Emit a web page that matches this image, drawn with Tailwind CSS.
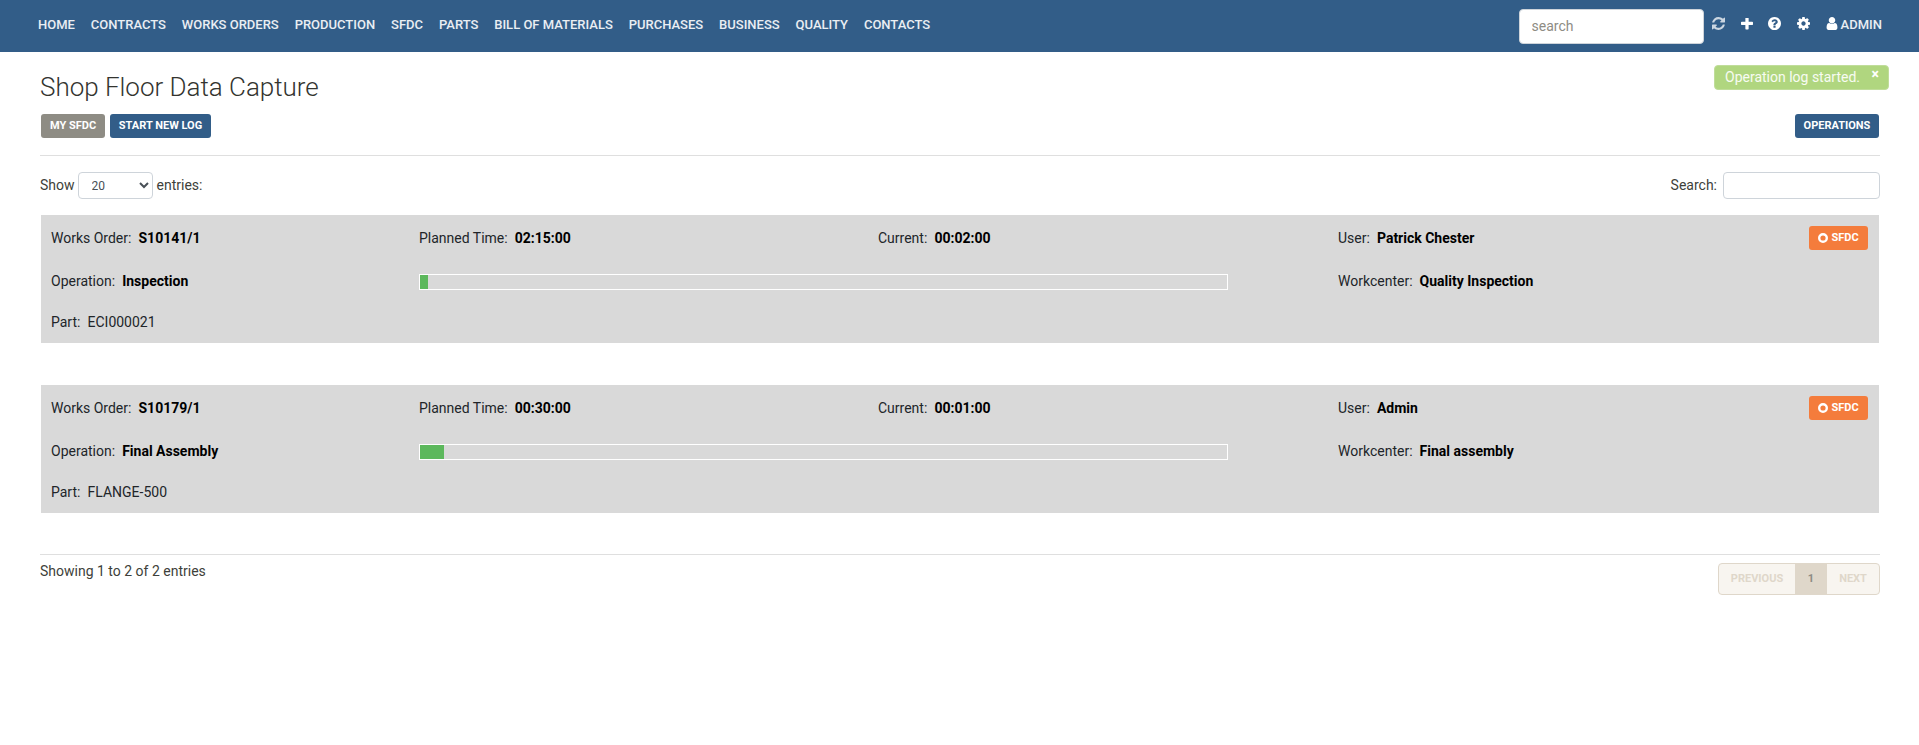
<!DOCTYPE html>
<html lang="en">
<head>
    <meta charset="UTF-8">
    <title>Shop Floor Data Capture</title>
    <script src="https://cdn.jsdelivr.net/npm/@tailwindcss/browser@4"></script>
</head>
<body class="bg-white font-['Roboto',sans-serif] text-[14px] text-[#3e3f3a]">
    <!-- Navbar -->
    <nav class="h-[52px] bg-[#325d88] flex items-center pl-[38px] pr-[37px]">
        <div class="flex gap-[15.9px] text-[13px] font-medium uppercase text-white/90 -mt-[2px]">
            <a>Home</a><a>Contracts</a><a>Works Orders</a><a>Production</a><a>SFDC</a><a>Parts</a><a>Bill of Materials</a><a>Purchases</a><a>Business</a><a>Quality</a><a>Contacts</a>
        </div>
        <div class="ml-auto flex items-center">
            <input class="w-[185px] h-[35px] bg-white rounded-[4px] border border-[#ced4da] px-[12px] text-[14px] placeholder:text-[#8e8c84] mr-[8px]" placeholder="search">
            <svg class="w-[13px] h-[13px] -mt-[5px] fill-white/75 mr-[16px]" viewBox="128 128 1536 1536"><path d="M1639 1056q0 5-1 7-64 268-268 434.5t-478 166.5q-146 0-282.5-55t-243.5-157l-129 129q-19 19-45 19t-45-19-19-45v-448q0-26 19-45t45-19h448q26 0 45 19t19 45-19 45l-137 137q71 66 161 102t187 36q134 0 250-65t186-179q11-17 53-117 8-23 30-23h192q13 0 22.5 9.5t9.5 22.5zm25-800v448q0 26-19 45t-45 19h-448q-26 0-45-19t-19-45 19-45l138-138q-148-137-349-137-134 0-250 65t-186 179q-11 17-53 117-8 23-30 23h-199q-13 0-22.5-9.5t-9.5-22.5v-7q65-268 270-434.5t480-166.5q146 0 284 55.5t245 156.5l130-129q19-19 45-19t45 19 19 45z"/></svg>
            <svg class="w-[12px] h-[12px] -mt-[5px] fill-white mr-[15px]" viewBox="192 192 1408 1408"><path d="M1600 736v192q0 40-28 68t-68 28h-416v416q0 40-28 68t-68 28h-192q-40 0-68-28t-28-68v-416h-416q-40 0-68-28t-28-68v-192q0-40 28-68t68-28h416v-416q0-40 28-68t68-28h192q40 0 68 28t28 68v416h416q40 0 68 28t28 68z"/></svg>
            <svg class="w-[13px] h-[13px] -mt-[5px] fill-white mr-[16px]" viewBox="128 128 1536 1536"><path d="M1024 1376v-192q0-14-9-23t-23-9h-192q-14 0-23 9t-9 23v192q0 14 9 23t23 9h192q14 0 23-9t9-23zm256-672q0-88-55.5-163t-138.5-116-170-41q-243 0-371 213-15 24 8 42l132 100q7 6 19 6 16 0 25-12 53-68 86-92 34-24 86-24 48 0 85.5 26t37.5 59q0 38-20 61t-68 45q-63 28-115.5 86.5t-52.5 125.5v36q0 14 9 23t23 9h192q14 0 23-9t9-23q0-19 21.5-49.5t54.5-49.5q32-18 49-28.5t46-35 44.5-48 28-60.5 12.5-81zm384 192q0 209-103 385.5t-279.5 279.5-385.5 103-385.5-103-279.5-279.5-103-385.5 103-385.5 279.5-279.5 385.5-103 385.5 103 279.5 279.5 103 385.5z"/></svg>
            <svg class="w-[13px] h-[13px] -mt-[5px] fill-white mr-[16px]" viewBox="128 128 1536 1536"><path d="M1152 896q0-106-75-181t-181-75-181 75-75 181 75 181 181 75 181-75 75-181zm512-109v222q0 12-8 23t-20 13l-185 28q-19 54-39 91 35 50 107 138 10 12 10 25t-9 23q-27 37-99 108t-94 71q-12 0-26-9l-138-108q-44 23-91 38-16 136-29 186-7 28-36 28h-222q-14 0-24.5-8.5t-11.5-21.5l-28-184q-49-16-90-37l-141 107q-10 9-25 9-14 0-25-11-126-114-165-168-7-10-7-23 0-12 8-23 15-21 51-66.5t54-70.5q-27-50-41-99l-183-27q-13-2-21-12.5t-8-23.5v-222q0-12 8-23t19-13l186-28q14-46 39-92-40-57-107-138-10-12-10-24 0-10 9-23 26-36 98.5-107.5t94.5-71.5q13 0 26 10l138 107q44-23 91-38 16-136 29-186 7-28 36-28h222q14 0 24.5 8.5t11.5 21.5l28 184q49 16 90 37l142-107q9-9 24-9 13 0 25 10 129 119 165 170 7 8 7 22 0 12-8 23-15 21-51 66.5t-54 70.5q26 50 41 98l183 28q13 2 21 12.5t8 23.5z"/></svg>
            <svg class="w-[12px] h-[13px] -mt-[5px] fill-white mr-[3px]" viewBox="256 128 1280 1536"><path d="M1536 1399q0 109-62.5 187t-150.5 78h-854q-88 0-150.5-78t-62.5-187q0-85 8.5-160.5t31.5-152 58.5-131 94-89 134.5-34.5q131 128 313 128t313-128q76 0 134.5 34.5t94 89 58.5 131 31.5 152 8.5 160.5zm-256-887q0 159-112.5 271.5t-271.5 112.5-271.5-112.5-112.5-271.5 112.5-271.5 271.5-112.5 271.5 112.5 112.5 271.5z"/></svg>
            <span class="text-[13px] font-medium uppercase text-white/90 -mt-[3px]">Admin</span>
        </div>
    </nav>

    <!-- Alert -->
    <div class="absolute left-[1714px] top-[65px] w-[175px] h-[25px] bg-[#b0d67f] rounded-[4px] border border-[#c0dd9a] pl-[10px] leading-[23px] text-white/90">
        Operation log started.
        <span class="absolute right-[9px] top-[-3px] text-[14px] font-bold text-white">×</span>
    </div>

    <main class="pl-[40px] pr-[39px]">
        <h1 class="pt-[20px] text-[26px] font-light leading-[31px] tracking-[-0.02px] text-[#33342f] h-[62px]">Shop Floor Data Capture</h1>

        <div class="flex items-start pl-[1px] pr-[1px] h-[41px]">
            <a class="h-[24px] w-[64px] text-center mr-[5px] rounded-[3px] bg-[#8e8c84] text-white text-[11px] font-bold uppercase leading-[24px]">My SFDC</a>
            <a class="h-[24px] w-[101px] text-center rounded-[3px] bg-[#325d88] text-white text-[11px] font-bold uppercase leading-[24px]">Start New Log</a>
            <a class="ml-auto h-[24px] w-[84px] text-center rounded-[3px] bg-[#325d88] text-white text-[11px] font-bold uppercase leading-[24px]">Operations</a>
        </div>
        <hr class="border-t border-[#dfdfdf]">

        <div class="flex items-center h-[27px] mt-[16px] mb-[16px]">
            <span>Show</span>
            <select class="ml-[3px] w-[75px] h-[27px] rounded-[4px] border border-[#ced4da] bg-white pl-[9px] text-[12px] text-[#495057]"><option>20</option></select>
            <span class="ml-[4px]">entries:</span>
            <span class="ml-auto">Search:</span>
            <input class="ml-[6px] w-[157px] h-[27px] rounded-[4px] border border-[#ced4da] bg-white">
        </div>

        <!-- Card 1 -->
        <div class="mx-[1px] h-[128px] bg-[#d9d9d9] pl-[10px] pr-[11px] pt-[11px] grid grid-cols-[368px_459px_460px_1fr] grid-rows-[43px_41px_24px] leading-[24px] text-[#212529] mb-[42px]">
            <div>Works Order: <b class="ml-[3.6px] text-black">S10141/1</b></div>
            <div>Planned Time: <b class="ml-[3.6px] text-black">02:15:00</b></div>
            <div>Current: <b class="ml-[3.6px] text-black">00:02:00</b></div>
            <div class="flex justify-between">
                <span>User: <b class="ml-[3.6px] text-black">Patrick Chester</b></span>
                <a class="h-[24px] w-[59px] rounded-[3px] bg-[#f47c3c] text-white text-[11px] font-bold flex items-center justify-center gap-[3px]">
                    <svg class="w-[10px] h-[10px] fill-none stroke-white stroke-[2.4px]" viewBox="0 0 10 10"><circle cx="5" cy="5" r="3.8"/></svg>
                    SFDC
                </a>
            </div>
            <div>Operation: <b class="ml-[3.6px] text-black">Inspection</b></div>
            <div class="col-span-2 pt-[5px]">
                <div class="w-[809px] h-[16px] border border-white"><div class="h-full bg-[#5cb85c]" style="width: 1%"></div></div>
            </div>
            <div>Workcenter: <b class="ml-[3.6px] text-black">Quality Inspection</b></div>
            <div class="col-span-4">Part: <span class="ml-[3.6px]">ECI000021</span></div>
        </div>

        <!-- Card 2 -->
        <div class="mx-[1px] h-[128px] bg-[#d9d9d9] pl-[10px] pr-[11px] pt-[11px] grid grid-cols-[368px_459px_460px_1fr] grid-rows-[43px_41px_24px] leading-[24px] text-[#212529] mb-[41px]">
            <div>Works Order: <b class="ml-[3.6px] text-black">S10179/1</b></div>
            <div>Planned Time: <b class="ml-[3.6px] text-black">00:30:00</b></div>
            <div>Current: <b class="ml-[3.6px] text-black">00:01:00</b></div>
            <div class="flex justify-between">
                <span>User: <b class="ml-[3.6px] text-black">Admin</b></span>
                <a class="h-[24px] w-[59px] rounded-[3px] bg-[#f47c3c] text-white text-[11px] font-bold flex items-center justify-center gap-[3px]">
                    <svg class="w-[10px] h-[10px] fill-none stroke-white stroke-[2.4px]" viewBox="0 0 10 10"><circle cx="5" cy="5" r="3.8"/></svg>
                    SFDC
                </a>
            </div>
            <div>Operation: <b class="ml-[3.6px] text-black">Final Assembly</b></div>
            <div class="col-span-2 pt-[5px]">
                <div class="w-[809px] h-[16px] border border-white"><div class="h-full bg-[#5cb85c]" style="width: 3%"></div></div>
            </div>
            <div>Workcenter: <b class="ml-[3.6px] text-black">Final assembly</b></div>
            <div class="col-span-4">Part: <span class="ml-[3.6px]">FLANGE-500</span></div>
        </div>

        <hr class="border-t border-[#dfdfdf]">

        <div class="flex items-start mt-[8px]">
            <span class="-mt-[2px]">Showing 1 to 2 of 2 entries</span>
            <div class="ml-auto flex h-[32px] rounded-[4px] border border-[#dfd7ca] bg-[#f8f5f0] text-[11px] font-bold uppercase text-[#dfd7ca] leading-[30px]">
                <span class="w-[76px] text-center">Previous</span>
                <span class="w-[32px] text-center bg-[#dfd7ca] text-[#8e8c84]">1</span>
                <span class="w-[52px] text-center">Next</span>
            </div>
        </div>
    </main>
</body>
</html>
